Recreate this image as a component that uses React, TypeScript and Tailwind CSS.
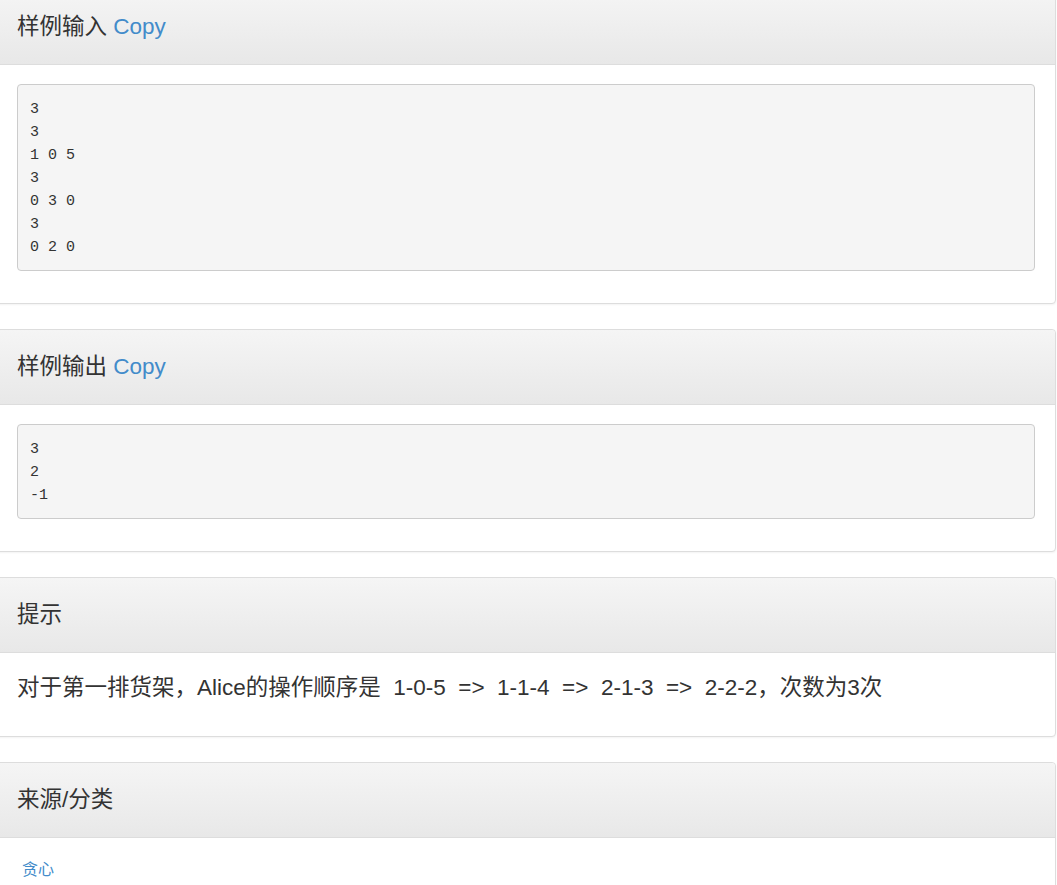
import React from "react";

const sans = { fontFamily: '"Liberation Sans", Arial, "Noto Sans CJK SC", sans-serif' };

type PanelProps = { title: React.ReactNode; children: React.ReactNode; first?: boolean };

const Panel: React.FC<PanelProps> = ({ title, children, first }) => (
  <div
    className={`mb-[25px] rounded border border-[#dddddd] bg-white shadow-[0_1px_2px_rgba(0,0,0,0.05)] ${first ? "-mt-[11px]" : ""}`}
  >
    <div className="rounded-t border-b border-[#dddddd] bg-gradient-to-b from-[#f5f5f5] to-[#e8e8e8] px-5 py-6 text-[22.5px] leading-[26px] text-[#333333]">
      {title}
    </div>
    <div className="px-5 pt-[19px] pb-5">{children}</div>
  </div>
);

const Sample: React.FC<{ lines: string[] }> = ({ lines }) => (
  <pre className="mb-[12px] rounded border border-[#cccccc] bg-[#f5f5f5] px-3 pt-[13px] pb-[11px] font-['Liberation_Mono',monospace] text-[15px] leading-[23px] text-[#333333]">
    {lines.join("\n")}
  </pre>
);

export default function App() {
  return (
    <div className="min-h-[885px] overflow-hidden bg-white" style={sans}>
      <div className="-ml-[4px] mr-px">
        <Panel
          first
          title={
            <>
              样例输入 <span className="text-[#428bca]">Copy</span>
            </>
          }
        >
          <Sample lines={["3", "3", "1 0 5", "3", "0 3 0", "3", "0 2 0"]} />
        </Panel>
        <Panel
          title={
            <>
              样例输出 <span className="text-[#428bca]">Copy</span>
            </>
          }
        >
          <Sample lines={["3", "2", "-1"]} />
        </Panel>
        <Panel title="提示">
          <p className="mt-px mb-[13px] whitespace-pre text-[22.5px] leading-[30px] text-[#333333]">
            {"对于第一排货架，Alice的操作顺序是  1-0-5  =>  1-1-4  =>  2-1-3  =>  2-2-2，次数为3次"}
          </p>
        </Panel>
        <Panel title="来源/分类">
          <a className="mt-px ml-[5px] inline-block text-[16px] text-[#428bca]">贪心</a>
        </Panel>
      </div>
    </div>
  );
}
